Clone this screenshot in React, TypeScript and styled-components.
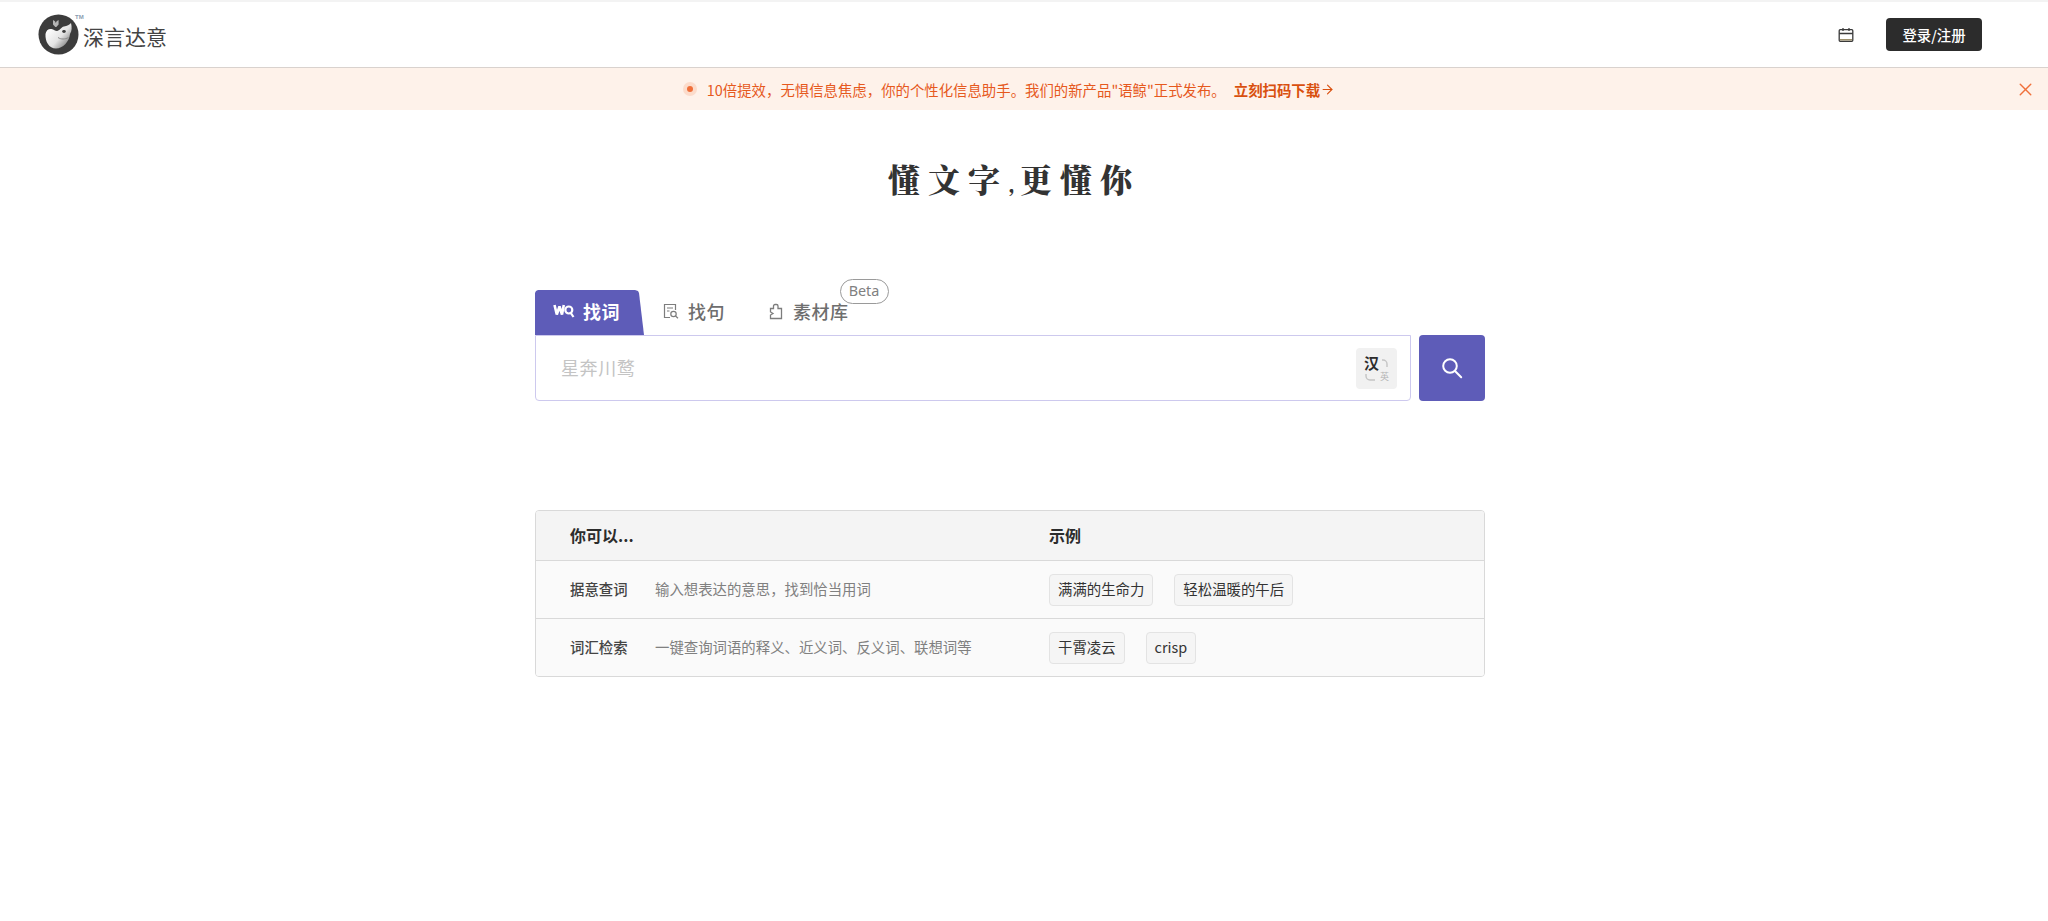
import React from "react";
import styled, { createGlobalStyle } from "styled-components";
import { ArrowRight, X } from "lucide-react";

const Global = createGlobalStyle`
  html, body { margin: 0; padding: 0; background: #fff; }
  body { font-family: "Noto Sans", "Noto Sans CJK SC", sans-serif; color: #2c2c2c; overflow: hidden; }
  * { box-sizing: border-box; }
`;
const Page = styled.div`
  min-height: 921px;
  border-top: 2px solid #f3f3f3;
  display: flex;
  flex-direction: column;
`;
const Header = styled.header`
  height: 66px;
  border-bottom: 1px solid #d9d2ce;
  display: flex;
  align-items: center;
  justify-content: space-between;
  padding: 0 66px 0 38px;
`;
const Brand = styled.div`
  display: flex;
  align-items: center;
  position: relative;
`;
const BrandName = styled.span`
  font-family: "Noto Sans CJK SC", sans-serif;
  font-size: 21px;
  line-height: 30px;
  color: #444;
  margin-left: 4px;
  margin-top: 3px;
`;
const Tm = styled.span`
  position: absolute;
  left: 37px;
  top: 0;
  font: 700 6px "Liberation Sans", sans-serif;
  color: #8a9bb0;
`;
const HeaderRight = styled.div`
  display: flex;
  align-items: center;
  gap: 32px;
`;
const LoginButton = styled.button`
  width: 96px;
  height: 33px;
  border: 0;
  border-radius: 4px;
  background: #2c2c2c;
  color: #fff;
  font: 500 14.4px "Noto Sans CJK SC", sans-serif;
  padding: 0;
`;
const Banner = styled.div`
  height: 42px;
  background: #fef2ea;
  display: flex;
  align-items: center;
  justify-content: center;
  position: relative;
  font: 400 14.4px "Noto Sans CJK SC", sans-serif;
  color: #e6591d;
  padding-right: 30px;
`;
const Pulse = styled.span`
  width: 14px;
  height: 14px;
  border-radius: 50%;
  background: #fcdccb;
  display: flex;
  align-items: center;
  justify-content: center;
  margin-right: 10px;
  &::after {
    content: "";
    width: 6px;
    height: 6px;
    border-radius: 50%;
    background: #f0703a;
  }
`;
const BannerLink = styled.span`
  display: inline-flex;
  align-items: center;
  font-weight: 700;
  color: #d9500f;
  margin-left: 8px;
`;
const BannerClose = styled.span`
  position: absolute;
  right: 12px;
  top: 11px;
  display: flex;
  color: #f0703a;
`;
const Content = styled.div`
  padding-right: 28px;
`;
const Title = styled.h1`
  margin: 43px 0 0;
  height: 50px;
  padding-left: 8px;
  text-align: center;
  font: 900 32px/50px "Noto Serif CJK SC", "Noto Sans CJK SC", serif;
  color: #333;
  letter-spacing: 8px;
`;
const TitleComma = styled.span`
  font-size: 20px;
  letter-spacing: 5px;
`;
const Main = styled.main`
  width: 950px;
  margin: 0 auto;
`;
const SearchArea = styled.section`
  margin-top: 87px;
`;
const Tabs = styled.div`
  display: flex;
  height: 45px;
  align-items: flex-end;
`;
const ActiveTab = styled.div`
  width: 109px;
  height: 45px;
  background: #5e5cb8;
  color: #fff;
  clip-path: polygon(0 3px, 1px 1px, 3px 0, 100px 0, 103px 1px, 104px 3px, 109px 45px, 0 45px);
  display: flex;
  align-items: center;
  padding: 0 0 3px 18px;
  gap: 8px;
  font: 700 18px "Noto Sans CJK SC", sans-serif;
  letter-spacing: 0.5px;
`;
const Tab = styled.div<{ $ml: number }>`
  height: 45px;
  display: flex;
  align-items: center;
  position: relative;
  gap: 8px;
  padding-bottom: 3px;
  color: #6e6e6e;
  font: 500 18px "Noto Sans CJK SC", sans-serif;
  letter-spacing: 0.5px;
  margin-left: ${(p) => p.$ml}px;
`;
const BetaBadge = styled.span`
  position: absolute;
  right: -40px;
  top: -11px;
  width: 49px;
  height: 25px;
  border: 1px solid #9a9a9a;
  border-radius: 13px;
  background: #fff;
  color: #808080;
  font: 400 14.4px/22px "Noto Sans", sans-serif;
  text-align: center;
  letter-spacing: 0;
`;
const SearchRow = styled.div`
  display: flex;
  gap: 8px;
  height: 66px;
`;
const InputBox = styled.div`
  flex: 1;
  border: 1px solid #cdc9ee;
  border-radius: 0 0 4px 4px;
  display: flex;
  align-items: center;
  justify-content: space-between;
  padding: 0 13px 0 25px;
`;
const Placeholder = styled.span`
  color: #c4c4c4;
  font: 400 18px "Noto Sans CJK SC", sans-serif;
  letter-spacing: 0.6px;
  margin-bottom: 2px;
`;
const LangToggle = styled.div`
  width: 41px;
  height: 41px;
  border-radius: 4px;
  background: #f1f1f1;
  position: relative;
`;
const LangMain = styled.span`
  position: absolute;
  left: 8px;
  top: 5px;
  font: 700 15px/20px "Noto Sans CJK SC", sans-serif;
  color: #2c2c2c;
`;
const LangSub = styled.span`
  position: absolute;
  right: 8px;
  bottom: 7px;
  font: 400 9px/11px "Noto Sans CJK SC", sans-serif;
  color: #b4b4b4;
`;
const LangArcs = styled.svg`
  position: absolute;
  inset: 0;
`;
const SearchButton = styled.button`
  width: 66px;
  height: 66px;
  border: 0;
  border-radius: 4px;
  background: #5e5cb8;
  color: #fff;
  display: flex;
  align-items: center;
  justify-content: center;
  padding: 0;
`;
const Table = styled.section`
  margin-top: 109px;
  border: 1px solid #d9d9d9;
  border-radius: 4px;
  overflow: hidden;
  background: #fafafa;
`;
const Row = styled.div<{ $head?: boolean }>`
  display: grid;
  grid-template-columns: 479px 1fr;
  height: ${(p) => (p.$head ? "50px" : "58px")};
  align-items: center;
  background: ${(p) => (p.$head ? "#f4f4f4" : "#fafafa")};
  border-bottom: 1px solid #d9d9d9;
  padding-left: 34px;
  &:last-child { border-bottom: 0; height: 57px; }
`;
const HeadCell = styled.div`
  font: 700 16px "Noto Sans CJK SC", sans-serif;
  color: #2c2c2c;
  margin-bottom: 2px;
`;
const UseCell = styled.div`
  display: flex;
  align-items: center;
  gap: 27px;
  margin-bottom: 2px;
`;
const UseName = styled.span`
  font: 500 14.4px "Noto Sans CJK SC", sans-serif;
  color: #444;
  width: 58px;
`;
const UseDesc = styled.span`
  font: 400 14.4px "Noto Sans CJK SC", sans-serif;
  color: #808080;
`;
const Examples = styled.div`
  display: flex;
  gap: 21px;
`;
const Chip = styled.span`
  height: 32px;
  padding: 0 8px 2px;
  display: inline-flex;
  align-items: center;
  border: 1px solid #e3e3e3;
  border-radius: 4px;
  background: #f5f5f5;
  color: #333;
  font: 400 14.4px "Noto Sans CJK SC", "Noto Sans", sans-serif;
`;

const Logo = () => (
  <svg width="41" height="41" viewBox="0 0 41 41">
    <defs>
      <linearGradient id="whale" x1="0.1" y1="0.2" x2="0.9" y2="0.9">
        <stop offset="0" stopColor="#ffffff" />
        <stop offset="0.55" stopColor="#e4e4e4" />
        <stop offset="1" stopColor="#777777" />
      </linearGradient>
    </defs>
    <circle cx="20.500" cy="20.500" r="20" fill="#3c3c3c" />
    <path d="M7.500 20C8 16.500 10.500 14.500 13.500 15c2.500.5 3.500 2 5.500 2 2.500 0 4-4 7-4.500 3-.5 5.500-1.500 7-3.500 1 4 1 8-1 11-1 8-7 14.500-14 14.500S7 27.500 7.500 20z" fill="url(#whale)" />
    <path d="M15 6l2 1.200.8 1.800.8-1.800 2-1.200v4.500l-2.300 2.500h-1l-2.300-2.500z" fill="#b4b4b4" />
    <ellipse cx="26" cy="17.500" rx="1.800" ry="1.400" fill="#3c3c3c" />
    <path d="M20 23.500c3 2 7 2 10.500 0" fill="none" stroke="#8a8a8a" strokeWidth="1" />
  </svg>
);
const Calendar = () => (
  <svg width="16" height="16" viewBox="0 0 16 16" fill="none" stroke="#3a3a3a" strokeWidth="1.300">
    <rect x="1.200" y="2.700" width="13.600" height="11.600" rx="1" />
    <path d="M1.200 6.500h13.600M5 1v3M11 1v3" />
    <path d="M2 12.800h12" stroke="#8a7a50" />
  </svg>
);
const WordIcon = () => (
  <svg width="22" height="18" viewBox="0 0 22 18" fill="none" stroke="#fff" strokeLinejoin="bevel">
    <path d="M1.500 3l2.300 9.500 2.700-8 2.500 8 1.800-9.500" strokeWidth="2.600" />
    <circle cx="15.800" cy="8" r="3.500" strokeWidth="2.200" />
    <path d="M17.800 11l2.700 4" strokeWidth="2.200" />
  </svg>
);
const SentenceIcon = () => (
  <svg width="18" height="18" viewBox="0 0 18 18" fill="none" stroke="#7d7d7d" strokeWidth="1.200">
    <path d="M8 15.500H2.500v-13h11V8" />
    <path d="M5 6h6M5 9h2.500" />
    <circle cx="11.500" cy="12" r="2.700" />
    <path d="M13.500 14l2.500 2.200" />
  </svg>
);
const PuzzleIcon = () => (
  <svg width="18" height="18" viewBox="0 0 18 18" fill="none" stroke="#7d7d7d" strokeWidth="1.300">
    <path d="M3.500 6.500h3V4A1.500 1.500 0 0 1 8 2.500h1.500A1.500 1.500 0 0 1 11 4v2.500h3.500v10h-11V13L6 11.500 3.500 10z" />
  </svg>
);
const SearchGlyph = () => (
  <svg width="22" height="22" viewBox="0 0 22 22" fill="none" stroke="#fff" strokeWidth="2" strokeLinecap="round">
    <circle cx="9" cy="9" r="6.800" />
    <path d="M14 14l6.200 6.200" />
  </svg>
);

const App = () => (
  <Page>
    <Global />
    <Header>
      <Brand>
        <Logo />
        <Tm>TM</Tm>
        <BrandName>深言达意</BrandName>
      </Brand>
      <HeaderRight>
        <Calendar />
        <LoginButton>登录/注册</LoginButton>
      </HeaderRight>
    </Header>
    <Banner>
      <Pulse />
      <span>10倍提效，无惧信息焦虑，你的个性化信息助手。我们的新产品"语鲸"正式发布。</span>
      <BannerLink>立刻扫码下载<ArrowRight size={15} strokeWidth={1.8} /></BannerLink>
      <BannerClose><X size={21} strokeWidth={1.6} /></BannerClose>
    </Banner>
    <Content>
      <Title>懂文字<TitleComma>,</TitleComma>更懂你</Title>
      <Main>
        <SearchArea>
          <Tabs>
            <ActiveTab><WordIcon />找词</ActiveTab>
            <Tab $ml={18}><SentenceIcon />找句</Tab>
            <Tab $ml={42}><PuzzleIcon />素材库<BetaBadge>Beta</BetaBadge></Tab>
          </Tabs>
          <SearchRow>
            <InputBox>
              <Placeholder>星奔川鹜</Placeholder>
              <LangToggle>
                <LangMain>汉</LangMain>
                <LangArcs width="41" height="41" viewBox="0 0 41 41" fill="none" stroke="#c4c4c4" strokeWidth="1.400">
                  <path d="M26 12h1a4 4 0 0 1 4 4v3M10 26v2a4 4 0 0 0 4 4h5" />
                </LangArcs>
                <LangSub>英</LangSub>
              </LangToggle>
            </InputBox>
            <SearchButton><SearchGlyph /></SearchButton>
          </SearchRow>
        </SearchArea>
        <Table>
          <Row $head>
            <HeadCell>你可以...</HeadCell>
            <HeadCell>示例</HeadCell>
          </Row>
          <Row>
            <UseCell><UseName>据意查词</UseName><UseDesc>输入想表达的意思，找到恰当用词</UseDesc></UseCell>
            <Examples><Chip>满满的生命力</Chip><Chip>轻松温暖的午后</Chip></Examples>
          </Row>
          <Row>
            <UseCell><UseName>词汇检索</UseName><UseDesc>一键查询词语的释义、近义词、反义词、联想词等</UseDesc></UseCell>
            <Examples><Chip>干霄凌云</Chip><Chip>crisp</Chip></Examples>
          </Row>
        </Table>
      </Main>
    </Content>
  </Page>
);
export default App;
